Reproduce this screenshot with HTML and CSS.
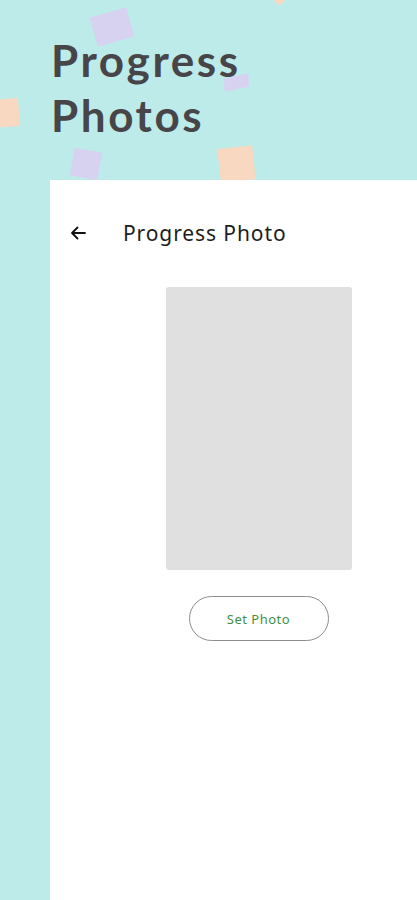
FILE: index.html
```html
<!DOCTYPE html>
<html lang="en">
<head>
  <meta charset="UTF-8">
  <meta name="viewport" content="width=device-width, initial-scale=1.0">
  <title>Progress Photos</title>
  <link rel="stylesheet" href="styles.css">
</head>
<body>
  <div class="hero">
    <span class="confetti c1"></span>
    <span class="confetti c2"></span>
    <span class="confetti c3"></span>
    <span class="confetti c4"></span>
    <span class="confetti c5"></span>
    <span class="confetti c6"></span>
    <h1>Progress<br>Photos</h1>
  </div>

  <div class="panel">
    <div class="topbar">
      <button class="back" aria-label="Back">
        <svg width="18" height="18" viewBox="0 0 18 18">
          <path d="M16 9H3M8.5 3.5L3 9l5.5 5.5" fill="none" stroke="#111" stroke-width="1.8" stroke-linecap="round" stroke-linejoin="round"/>
        </svg>
      </button>
      <span class="title">Progress Photo</span>
    </div>

    <div class="photo"></div>

    <button class="set-photo">Set Photo</button>
  </div>
</body>
</html>
```

FILE: styles.css
```css
html, body {
  margin: 0;
  padding: 0;
}
body {
  background: #bdebea;
  font-family: Lato, "Noto Sans", sans-serif;
  min-height: 900px;
}
.hero {
  position: relative;
  height: 180px;
  padding: 33px 0 0 51px;
  box-sizing: border-box;
}
.hero h1 {
  position: relative;
  margin: 0;
  font-family: Lato, sans-serif;
  font-size: 44px;
  font-weight: 700;
  line-height: 55px;
  letter-spacing: 2.6px;
  color: #474548;
}
.confetti {
  position: absolute;
  display: block;
}
.c1 {
  left: 93px;
  top: 12px;
  width: 38px;
  height: 30px;
  background: #d6d2f0;
  transform: rotate(-16deg);
}
.c2 {
  left: 224px;
  top: 76px;
  width: 25px;
  height: 13px;
  background: #d6d2f0;
  transform: rotate(-12deg) skewX(-8deg);
}
.c3 {
  left: -12px;
  top: 99px;
  width: 31px;
  height: 28px;
  background: #f8d8c0;
  transform: rotate(-4deg);
}
.c4 {
  left: 72px;
  top: 150px;
  width: 28px;
  height: 28px;
  background: #d6d2f0;
  transform: rotate(10deg);
}
.c5 {
  left: 219px;
  top: 147px;
  width: 35px;
  height: 34px;
  background: #f8d8c0;
  transform: rotate(-6deg);
}
.c6 {
  left: 275px;
  top: -8px;
  width: 10px;
  height: 12px;
  background: #f8d8c0;
  transform: rotate(45deg);
}
.panel {
  position: relative;
  margin-left: 50px;
  background: #fff;
  min-height: 720px;
  display: flex;
  flex-direction: column;
  align-items: center;
}
.topbar {
  align-self: stretch;
  display: flex;
  align-items: center;
  height: 40px;
  margin-top: 33px;
  padding-left: 18px;
}
.back {
  background: none;
  border: none;
  padding: 0;
  width: 20px;
  height: 20px;
  display: flex;
  align-items: center;
  justify-content: center;
  cursor: pointer;
}
.title {
  margin-left: 35px;
  font-family: "Noto Sans", sans-serif;
  font-size: 21px;
  letter-spacing: 0.9px;
  color: #1d1d1d;
}
.photo {
  width: 186px;
  height: 283px;
  margin: 34px 0 0 51px;
  background: #e0e0e0;
  border-radius: 3px;
}
.set-photo {
  margin: 26px 0 0 50px;
  width: 140px;
  height: 45px;
  border: 1px solid #8e8e8e;
  border-radius: 23px;
  background: #fff;
  color: #3f913f;
  font-family: "Noto Sans", sans-serif;
  font-size: 13px;
  letter-spacing: 0.5px;
  cursor: pointer;
}
```
